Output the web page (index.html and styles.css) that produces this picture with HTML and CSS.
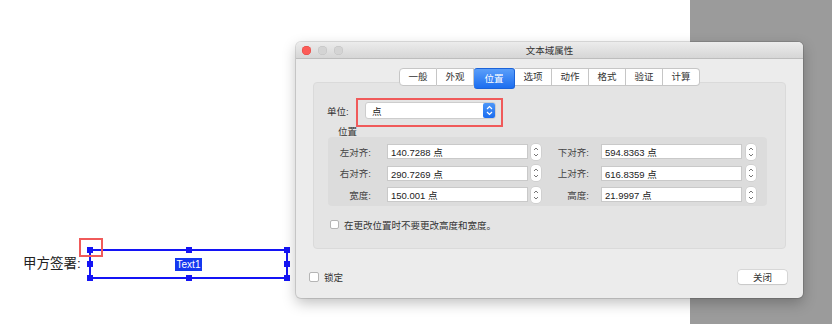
FILE: index.html
```html
<!DOCTYPE html>
<html lang="zh-CN">
<head>
    <meta charset="UTF-8">
    <title>文本域属性</title>
    <link rel="stylesheet" href="styles.css">
</head>
<body>
    <div class="desk">
        <div class="page"></div>
        <div class="side"></div>
    </div>

    <!-- Form field on the page -->
    <div class="sign-label">甲方签署:</div>
    <div class="field">
        <span class="field-name">Text1</span>
        <i class="h h-tl"></i><i class="h h-tm"></i><i class="h h-tr"></i>
        <i class="h h-ml"></i><i class="h h-mr"></i>
        <i class="h h-bl"></i><i class="h h-bm"></i><i class="h h-br"></i>
    </div>
    <div class="mark mark-handle"></div>

    <!-- Properties dialog -->
    <div class="dialog">
        <div class="titlebar">
            <div class="lights">
                <span class="light red"></span>
                <span class="light"></span>
                <span class="light"></span>
            </div>
            <div class="title">文本域属性</div>
        </div>
        <div class="dialog-body">
            <div class="tabs">
                <span class="tab">一般</span>
                <span class="tab">外观</span>
                <span class="tab active">位置</span>
                <span class="tab">选项</span>
                <span class="tab">动作</span>
                <span class="tab">格式</span>
                <span class="tab">验证</span>
                <span class="tab">计算</span>
            </div>
            <div class="panel">
                <div class="unit-row">
                    <span class="unit-label">单位:</span>
                    <div class="select">
                        <span class="select-value">点</span>
                        <span class="select-arrow">
                            <svg width="7" height="11" viewBox="0 0 7 11"><path d="M1 4 L3.5 1.5 L6 4 M1 7 L3.5 9.5 L6 7" fill="none" stroke="#fff" stroke-width="1.2"/></svg>
                        </span>
                    </div>
                    <div class="mark mark-select"></div>
                </div>

                <div class="group-title">位置</div>
                <div class="group">
                    <span class="lbl">左对齐:</span>
                    <span class="inp">140.7288 点</span>
                    <span class="step"><svg width="6" height="12" viewBox="0 0 6 12"><path d="M1 4 L3 2 L5 4 M1 8 L3 10 L5 8" fill="none" stroke="#777" stroke-width="1"/></svg></span>
                    <span class="lbl">下对齐:</span>
                    <span class="inp">594.8363 点</span>
                    <span class="step"><svg width="6" height="12" viewBox="0 0 6 12"><path d="M1 4 L3 2 L5 4 M1 8 L3 10 L5 8" fill="none" stroke="#777" stroke-width="1"/></svg></span>

                    <span class="lbl">右对齐:</span>
                    <span class="inp">290.7269 点</span>
                    <span class="step"><svg width="6" height="12" viewBox="0 0 6 12"><path d="M1 4 L3 2 L5 4 M1 8 L3 10 L5 8" fill="none" stroke="#777" stroke-width="1"/></svg></span>
                    <span class="lbl">上对齐:</span>
                    <span class="inp">616.8359 点</span>
                    <span class="step"><svg width="6" height="12" viewBox="0 0 6 12"><path d="M1 4 L3 2 L5 4 M1 8 L3 10 L5 8" fill="none" stroke="#777" stroke-width="1"/></svg></span>

                    <span class="lbl">宽度:</span>
                    <span class="inp">150.001 点</span>
                    <span class="step"><svg width="6" height="12" viewBox="0 0 6 12"><path d="M1 4 L3 2 L5 4 M1 8 L3 10 L5 8" fill="none" stroke="#777" stroke-width="1"/></svg></span>
                    <span class="lbl">高度:</span>
                    <span class="inp">21.9997 点</span>
                    <span class="step"><svg width="6" height="12" viewBox="0 0 6 12"><path d="M1 4 L3 2 L5 4 M1 8 L3 10 L5 8" fill="none" stroke="#777" stroke-width="1"/></svg></span>
                </div>

                <label class="check-row">
                    <span class="box"></span>
                    <span>在更改位置时不要更改高度和宽度。</span>
                </label>
            </div>

            <div class="footer">
                <label class="check-row lock">
                    <span class="box big"></span>
                    <span>锁定</span>
                </label>
                <button class="btn">关闭</button>
            </div>
        </div>
    </div>
</body>
</html>
```

FILE: styles.css
```css
body {
    margin: 0;
    width: 832px;
    height: 324px;
    overflow: hidden;
    position: relative;
    font-family: "Liberation Sans", "Noto Sans CJK SC", sans-serif;
    color: #333;
}
.desk {
    display: flex;
    height: 324px;
}
.page {
    flex: 1;
    background: #fff;
}
.side {
    width: 142px;
    background: #9b9b9b;
}

/* page content */
.sign-label {
    position: absolute;
    left: 23px;
    top: 255px;
    font-size: 13.5px;
    line-height: 18px;
    color: #222;
}
.field {
    position: absolute;
    left: 89px;
    top: 249px;
    width: 195px;
    height: 26px;
    border: 2px solid #1414f5;
    display: flex;
    align-items: center;
    justify-content: center;
}
.field-name {
    background: #1438f0;
    color: #fff;
    font-size: 10px;
    line-height: 13px;
    padding: 0 2px;
}
.h {
    position: absolute;
    width: 6px;
    height: 6px;
    background: #1414f5;
}
.h-tl { left: -4px; top: -4px; }
.h-tm { left: 95px; top: -4px; }
.h-tr { right: -4px; top: -4px; }
.h-ml { left: -4px; top: 10px; }
.h-mr { right: -4px; top: 10px; }
.h-bl { left: -4px; bottom: -4px; }
.h-bm { left: 95px; bottom: -4px; }
.h-br { right: -4px; bottom: -4px; }

.mark {
    position: absolute;
    border: 2px solid #f05a5a;
}
.mark-handle {
    left: 79px;
    top: 238px;
    width: 20px;
    height: 15px;
}

/* dialog */
.dialog {
    position: absolute;
    left: 296px;
    top: 42px;
    width: 507px;
    height: 256px;
    background: #ececec;
    border-radius: 5px;
    box-shadow: 0 0 0 1px rgba(0,0,0,0.12), 0 5px 14px rgba(0,0,0,0.25);
    font-size: 9.5px;
    overflow: hidden;
}
.titlebar {
    height: 16px;
    background: linear-gradient(#ececec, #d6d6d6);
    border-bottom: 1px solid #bdbdbd;
    position: relative;
    display: flex;
    align-items: center;
}
.lights {
    display: flex;
    gap: 7px;
    padding-left: 6px;
}
.light {
    width: 9px;
    height: 9px;
    border-radius: 50%;
    background: #d4d4d4;
    box-shadow: inset 0 0 0 0.5px #c0c0c0;
}
.light.red {
    background: #fc5b57;
    box-shadow: inset 0 0 0 0.5px #e0443e;
}
.title {
    position: absolute;
    left: 0;
    right: 0;
    text-align: center;
    font-size: 9.5px;
    color: #333;
}
.dialog-body {
    padding: 9px 17px 0;
}
.tabs {
    display: flex;
    justify-content: center;
    position: relative;
    z-index: 1;
}
.tab {
    width: 36px;
    height: 16px;
    line-height: 16px;
    text-align: center;
    background: #fff;
    border: 1px solid #c6c6c6;
    border-left: none;
    color: #333;
}
.tab:first-child {
    border-left: 1px solid #c6c6c6;
    border-radius: 4px 0 0 4px;
}
.tab:last-child {
    border-radius: 0 4px 4px 0;
}
.tab.active {
    width: 40px;
    height: 19px;
    line-height: 19px;
    background: linear-gradient(#5a9ef9, #1c6ef0);
    border-color: #1c63d8;
    border-radius: 3px;
    color: #fff;
}
.panel {
    margin-top: -7px;
    height: 167px;
    box-sizing: border-box;
    background: #e4e4e4;
    border: 1px solid #dadada;
    border-radius: 4px;
    padding-top: 19px;
}
.unit-row {
    display: flex;
    align-items: center;
    height: 17px;
    padding-left: 13px;
    position: relative;
}
.unit-label {
    width: 38px;
}
.select {
    width: 131px;
    height: 17px;
    box-sizing: border-box;
    background: #fff;
    border: 1px solid #cdcdcd;
    border-radius: 3px;
    display: flex;
    align-items: center;
    justify-content: space-between;
}
.select-value {
    padding-left: 6px;
    color: #222;
}
.select-arrow {
    width: 12px;
    height: 15px;
    background: linear-gradient(#4c96f8, #1a6cf0);
    border-radius: 2px;
    display: flex;
    align-items: center;
    justify-content: center;
}
.mark-select {
    left: 42px;
    top: -4px;
    width: 143px;
    height: 25px;
}
.group-title {
    margin: 7px 0 0 24px;
    line-height: 12px;
    color: #333;
}
.group {
    margin: -1px 0 0 14px;
    width: 439px;
    background: #dcdcdc;
    border-radius: 4px;
    padding: 7px 0 4px;
    display: grid;
    grid-template-columns: 59px 144px 10px 60px 145px 10px;
    grid-auto-rows: 15px;
    row-gap: 6.5px;
    align-items: center;
}
.lbl {
    text-align: right;
    padding-right: 16px;
    color: #444;
}
.lbl:nth-child(6n+4) {
    padding-right: 12px;
}
.inp {
    width: 141px;
    height: 15px;
    line-height: 15px;
    box-sizing: border-box;
    background: #fff;
    border: 1px solid #c9c9c9;
    padding-left: 3px;
    color: #222;
}
.step {
    width: 10px;
    height: 16px;
    background: #fff;
    border-radius: 4px;
    box-shadow: 0 0 0 0.5px #c4c4c4;
    display: flex;
    align-items: center;
    justify-content: center;
}
.check-row {
    display: flex;
    align-items: center;
    gap: 5px;
    margin: 14px 0 0 16px;
    height: 9px;
    color: #333;
}
.box {
    width: 9px;
    height: 9px;
    box-sizing: border-box;
    background: #fff;
    border: 1px solid #b5b5b5;
    border-radius: 2px;
}
.box.big {
    width: 10px;
    height: 10px;
}
.footer {
    display: flex;
    align-items: center;
    justify-content: space-between;
    margin: 21px -1px 0 -4px;
    height: 14px;
}
.footer .check-row {
    margin: 0;
    height: 10px;
}
.btn {
    width: 49px;
    height: 14px;
    padding: 0;
    border: none;
    border-radius: 3px;
    background: #fff;
    box-shadow: 0 0 0 0.5px #c2c2c2, 0 1px 1px rgba(0,0,0,0.12);
    font-family: "Liberation Sans", "Noto Sans CJK SC", sans-serif;
    font-size: 9.5px;
    color: #333;
}
```
